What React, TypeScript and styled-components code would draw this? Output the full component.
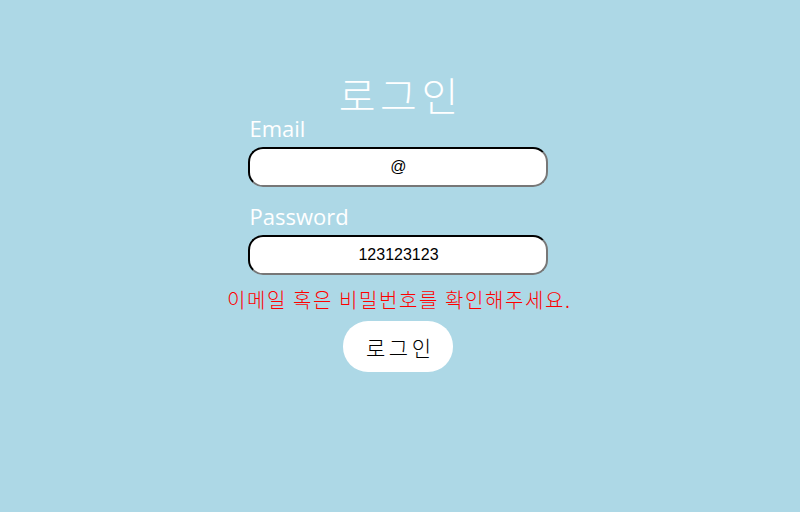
import React from "react";
import styled, { createGlobalStyle } from "styled-components";

const Global = createGlobalStyle`
  html, body { margin: 0; padding: 0; }
  body {
    background: #add8e6;
    width: 800px;
    height: 512px;
    overflow: hidden;
    font-family: "Noto Sans", "Noto Sans CJK KR", sans-serif;
  }
`;

const Page = styled.div`
  display: flex;
  flex-direction: column;
  align-items: center;
  padding-top: 73px;
  padding-right: 3px;
`;

const Title = styled.h1`
  margin: 0;
  font-family: "Noto Sans CJK KR", sans-serif;
  font-weight: 300;
  font-size: 40px;
  line-height: 42px;
  letter-spacing: 4.5px;
  padding-left: 4.5px;
  color: #ffffff;
`;

const Form = styled.form`
  display: flex;
  flex-direction: column;
  align-items: center;
`;

const Field = styled.div`
  display: flex;
  flex-direction: column;
  width: 300px;
`;

const Label = styled.label`
  font-family: "Open Sans", "Noto Sans", sans-serif;
  font-size: 22px;
  line-height: 26px;
  color: #ffffff;
  padding-left: 1px;
  margin-bottom: 6px;
`;

const Input = styled.input<{ $gap?: number }>`
  box-sizing: border-box;
  width: 300px;
  height: 40px;
  border: 2px inset #767676;
  border-top-color: #222;
  border-left-color: #222;
  border-right-color: #777;
  border-bottom-color: #777;
  border-radius: 15px;
  background: #fff;
  text-align: center;
  font-family: "Liberation Sans", Arial, sans-serif;
  font-size: 16px;
  color: #000;
  outline: none;
  margin: 0 0 ${(p) => p.$gap ?? 0}px;
`;

const ErrorText = styled.p`
  margin: 12px 0 0;
  font-family: "Noto Sans CJK KR", sans-serif;
  font-weight: 300;
  font-size: 20px;
  line-height: 26px;
  letter-spacing: 1.6px;
  padding-left: 1.6px;
  color: #ff0000;
`;

const Button = styled.button`
  margin-top: 8px;
  width: 110px;
  height: 51px;
  border: none;
  border-radius: 25px;
  background: #ffffff;
  font-family: "Noto Sans CJK KR", sans-serif;
  font-weight: 300;
  font-size: 21px;
  letter-spacing: 3.5px;
  padding: 0 0 0 3.5px;
  color: #000;
  cursor: pointer;
`;

export default function App() {
  return (
    <>
      <Global />
      <Page>
        <Title>로그인</Title>
        <Form onSubmit={(e) => e.preventDefault()}>
          <Field>
            <Label>Email</Label>
            <Input type="text" defaultValue="@" $gap={16} />
          </Field>
          <Field>
            <Label>Password</Label>
            <Input type="text" defaultValue="123123123" />
          </Field>
          <ErrorText>이메일 혹은 비밀번호를 확인해주세요.</ErrorText>
          <Button type="submit">로그인</Button>
        </Form>
      </Page>
    </>
  );
}
